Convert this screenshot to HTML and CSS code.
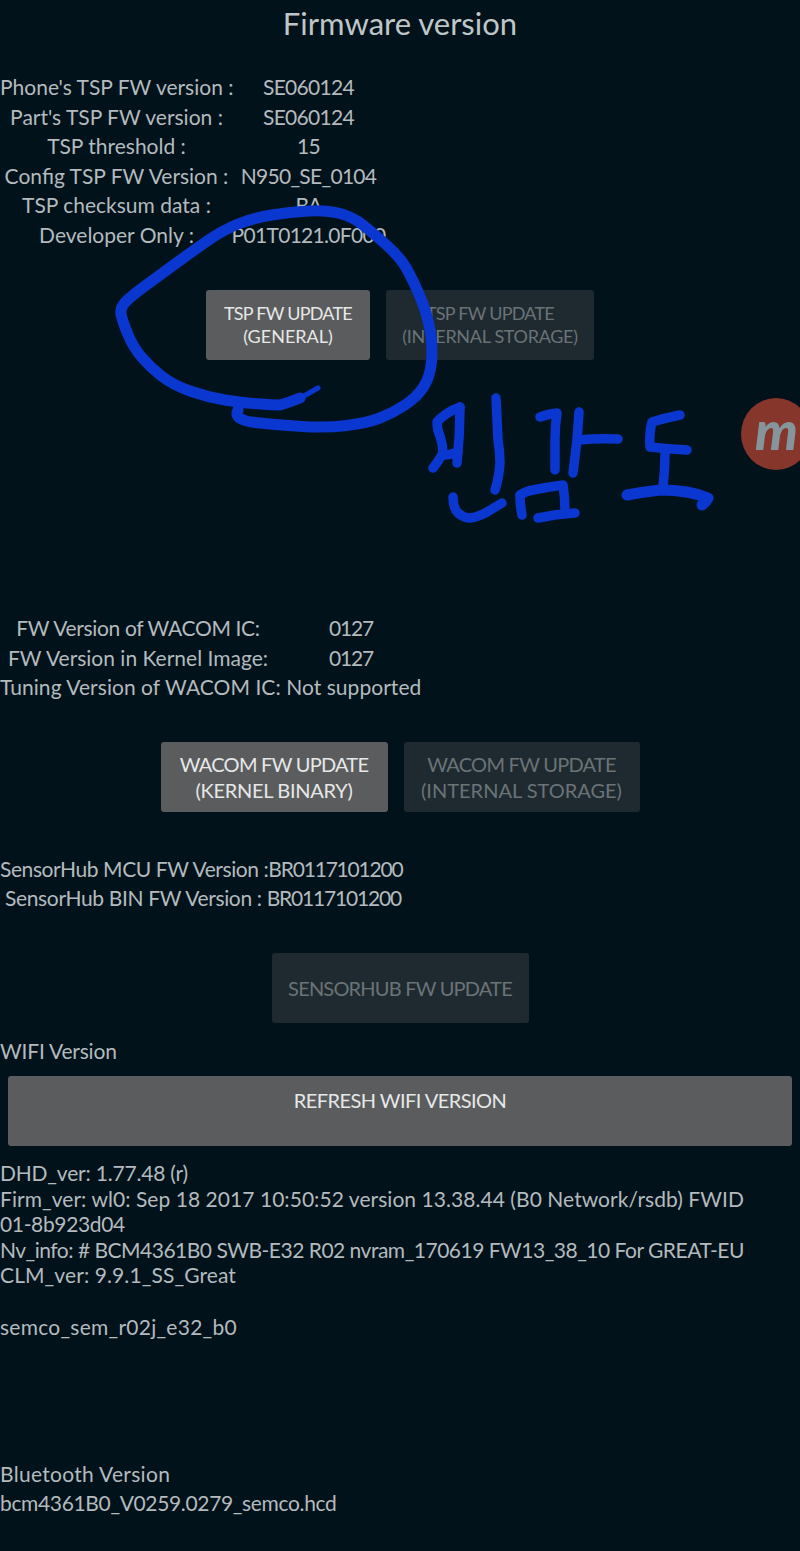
FILE: index.html
```html
<!DOCTYPE html>
<html lang="en">
<head>
<meta charset="utf-8">
<title>Firmware version</title>
<link rel="stylesheet" href="styles.css">
</head>
<body>
<main class="page">
  <h1 class="title">Firmware version</h1>

  <section class="info tsp">
    <div class="row"><span class="label">Phone's TSP FW version :</span><span class="value">SE060124</span></div>
    <div class="row"><span class="label">Part's TSP FW version :</span><span class="value">SE060124</span></div>
    <div class="row"><span class="label">TSP threshold :</span><span class="value">15</span></div>
    <div class="row"><span class="label">Config TSP FW Version :</span><span class="value">N950_SE_0104</span></div>
    <div class="row"><span class="label">TSP checksum data :</span><span class="value">BA</span></div>
    <div class="row"><span class="label">Developer Only :</span><span class="value">P01T0121.0F000</span></div>
  </section>

  <div class="buttons tsp-buttons">
    <button class="btn small w164"><span class="tight">TSP FW UPDATE</span><br>(GENERAL)</button>
    <button class="btn small off w208"><span class="tight">TSP FW UPDATE</span><br><span class="snug">(INTERNAL STORAGE)</span></button>
  </div>

  <section class="info wacom">
    <div class="row"><span class="label ls-n35">FW Version of WACOM IC:</span><span class="value digits">0127</span></div>
    <div class="row"><span class="label">FW Version in Kernel Image:</span><span class="value digits">0127</span></div>
    <div class="line ls-p05">Tuning Version of WACOM IC: Not supported</div>
  </section>

  <div class="buttons wacom-buttons">
    <button class="btn w227"><span class="tight">WACOM FW UPDATE</span><br><span class="snug">(KERNEL BINARY)</span></button>
    <button class="btn off w236"><span class="tight">WACOM FW UPDATE</span><br>(INTERNAL STORAGE)</button>
  </div>

  <section class="info hub">
    <div class="line ls-n42">SensorHub MCU FW Version :<span class="digits">BR0117101200</span></div>
    <div class="line indent ls-n35">SensorHub BIN FW Version : <span class="digits">BR0117101200</span></div>
  </section>

  <div class="buttons hub-buttons">
    <button class="btn off w257 ls-n80">SENSORHUB FW UPDATE</button>
  </div>

  <div class="line wifi-title ls-n20">WIFI Version</div>
  <div class="wifi-wrap"><button class="btn refresh ls-n55">REFRESH WIFI VERSION</button></div>

  <section class="dump">
    <div class="ls-n20">DHD_ver: 1.77.48 (r)</div>
    <div class="ls-p05">Firm_ver: wl0: Sep 18 2017 10:50:52 version 13.38.44 (B0 Network/rsdb) FWID</div>
    <div class="ls-n35">01-8b923d04</div>
    <div class="ls-n50">Nv_info: # BCM4361B0 SWB-E32 R02 nvram_170619 FW13_38_10 For GREAT-EU</div>
    <div class="ls-p10">CLM_ver: 9.9.1_SS_Great</div>
    <div class="gap ls-p25">semco_sem_r02j_e32_b0</div>
  </section>

  <section class="info bt">
    <div class="line ls-p30">Bluetooth Version</div>
    <div class="line ls-n35">bcm4361B0_V0259.0279_semco.hcd</div>
  </section>
</main>

<svg class="ink" viewBox="0 0 800 1551" aria-hidden="true">
  <path class="thin" d="M318 388 Q308 394 296 400"/>
  <path class="thick" d="M300 398 Q290 402 280 405 Q270 405 261.5 404 Q243 403 225 400 Q207 397 190 391 Q173 385 161.5 376 Q150 367 141.5 357 Q133 347 127.5 333.5 Q122 320 121 314 Q120 308 125 302.5 Q130 297 145 286 Q160 275 175 264 Q190 253 206.5 241.5 Q223 230 238 224 Q253 218 271.5 215 Q290 212 308.5 211 Q327 210 340 213.5 Q353 217 363 225 Q373 233 386.5 245 Q400 257 406.5 268.5 Q413 280 420 296.5 Q427 313 430 330 Q433 347 431.5 362 Q430 377 423.5 387 Q417 397 405 405 Q393 413 380 418 Q367 423 347 425.5 Q327 428 302 426.5 Q277 425 255 422.5 Q233 420 238 410"/>
  <path d="M460 407 Q446 412 437 422 Q437 430 440 436 Q443 445 443 453 Q438 462 433 468"/>
  <path d="M460 407 Q460 435 457 463"/>
  <path d="M443 455 Q450 455 458 452"/>
  <path d="M496 398 Q497 420 498 440 Q500 452 500 463 Q499 478 495 490"/>
  <path d="M453 497 Q453 508 458 513 Q464 518 470 518 Q478 517 487 512 Q495 507 502 503"/>
  <path d="M540 417 Q548 414 557 413 Q555 426 555 440 Q555 455 555 470"/>
  <path d="M579 412 Q578 426 577 440 Q575 456 573 473"/>
  <path d="M578 440 Q598 438 618 439"/>
  <path d="M520 495 Q520 505 522 515"/>
  <path d="M520 495 Q526 491 533 490 Q548 487 563 485 Q565 498 565 510"/>
  <path d="M538 518 Q556 514 575 513"/>
  <path d="M680 415 Q665 418 652 422 Q649 434 650 447 Q668 449 687 450"/>
  <path d="M665 453 Q665 470 663 487"/>
  <path class="thick" d="M627 495 Q643 492 660 490 Q674 490 687 492 Q698 494 708 498 Q706 502 702 505"/>
</svg>
<div class="badge"><span class="badge-m">m</span></div>
</body>
</html>
```

FILE: styles.css
```css
* { box-sizing: border-box; }
html, body { margin: 0; padding: 0; }
body {
  width: 800px;
  height: 1551px;
  position: relative;
  overflow: hidden;
  background: #02121b;
  color: #b3bbbe;
  font-family: Lato, "Open Sans", sans-serif;
  font-size: 21px;
}
.title {
  margin: 0;
  height: 46px;
  line-height: 46px;
  text-align: center;
  font-size: 31px;
  font-weight: 400;
  color: #bfc6c8;
}
.row, .line { height: 29.5px; line-height: 29.5px; white-space: nowrap; }
.row { display: flex; }
.value { display: flex; justify-content: center; }
.tsp { margin-top: 26px; }
.tsp .label { width: 233px; text-align: center; }
.tsp .value { width: 137px; margin-left: 7px; letter-spacing: -0.7px; }
.wacom .label { width: 276px; text-align: center; }
.wacom .value { width: 44px; margin-left: 53px; }
.digits { letter-spacing: -1.2px; }
.indent { padding-left: 5px; }
.ls-n80 { letter-spacing: -0.8px; }
.ls-n55 { letter-spacing: -0.55px; }
.ls-n50 { letter-spacing: -0.5px; }
.ls-n42 { letter-spacing: -0.42px; }
.ls-n35 { letter-spacing: -0.35px; }
.ls-n20 { letter-spacing: -0.2px; }
.ls-p05 { letter-spacing: 0.05px; }
.ls-p10 { letter-spacing: 0.1px; }
.ls-p25 { letter-spacing: 0.25px; }
.ls-p30 { letter-spacing: 0.3px; }
.buttons { display: flex; justify-content: center; gap: 16px; }
.btn {
  display: block;
  margin: 0;
  border: 0;
  border-radius: 3px;
  padding: 0;
  background: #5b5c5e;
  color: #e6e8e8;
  font-family: inherit;
  font-size: 20px;
  line-height: 26px;
  height: 70px;
}
.btn.off { background: #1f2a30; color: #6a7376; }
.small { font-size: 18px; line-height: 23px; }
.tight { letter-spacing: -0.75px; }
.snug { letter-spacing: -0.3px; }
.w164 { width: 164px; }
.w208 { width: 208px; }
.w227 { width: 227px; }
.w236 { width: 236px; }
.w257 { width: 257px; }
.tsp-buttons { margin-top: 41px; }
.wacom { margin-top: 253px; }
.wacom-buttons { margin-top: 40px; }
.hub { margin-top: 42px; }
.hub-buttons { margin-top: 40px; }
.wifi-title { margin-top: 13px; }
.wifi-wrap { padding: 11px 8px 0; }
.refresh { width: 100%; padding-bottom: 22px; }
.dump { margin-top: 14px; line-height: 25.6px; white-space: nowrap; }
.gap { margin-top: 25.6px; }
.bt { margin-top: 120px; }
.bt .line { height: 29px; line-height: 29px; }
.ink {
  position: absolute;
  left: 0;
  top: 0;
  width: 800px;
  height: 1551px;
  fill: none;
  stroke: #0a37cf;
  stroke-width: 9.5;
  stroke-linecap: round;
  stroke-linejoin: round;
}
.ink .thick { stroke-width: 11; }
.ink .thin { stroke-width: 5; }
.badge {
  position: absolute;
  left: 741px;
  top: 398px;
  width: 70px;
  height: 72px;
  border-radius: 50%;
  background: #86362a;
  color: #84959c;
  padding-left: 14px;
  font-weight: 900;
  font-style: italic;
  font-size: 54px;
  line-height: 64px;
}
```
